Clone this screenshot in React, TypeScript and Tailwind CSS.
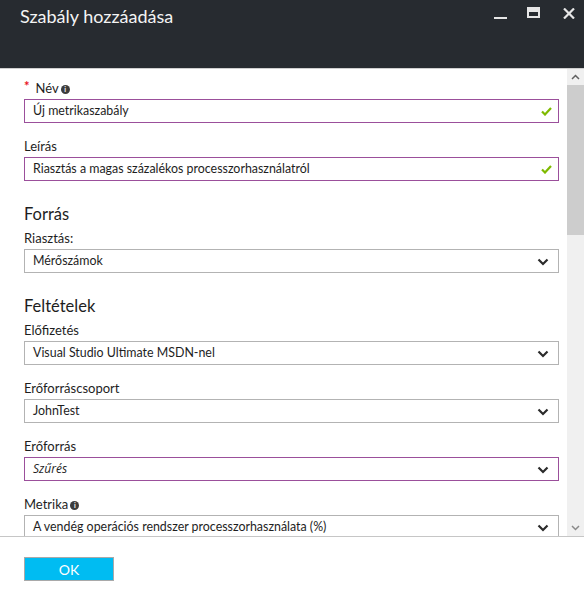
import React from "react";

const font = { fontFamily: 'Lato, "Noto Sans", sans-serif' };

function Chevron() {
  return (
    <svg width="12" height="8" viewBox="0 0 12 8" className="absolute right-[9px] top-[8px]">
      <path d="M1.5 1.5 L6 6 L10.5 1.5" fill="none" stroke="#2b2b2b" strokeWidth="2.2" />
    </svg>
  );
}

function Check() {
  return (
    <svg width="11" height="9" viewBox="0 0 11 9" className="absolute right-[6px] top-[7px]">
      <path d="M1 4.5 L4 7.5 L10 1" fill="none" stroke="#7fba00" strokeWidth="2.2" />
    </svg>
  );
}

function Info() {
  return (
    <span className="ml-[2px] mt-[3px] inline-flex h-[9px] w-[9px] items-center justify-center rounded-full bg-[#3c3c3c] text-[7px] font-bold leading-none text-white">
      i
    </span>
  );
}

function Label({ children, req, info }: { children: React.ReactNode; req?: boolean; info?: boolean }) {
  return (
    <div className="flex h-4 items-center text-[13px] leading-4 text-[#1e1e1e]">
      {req && <span className="mb-[4px] mr-[6px] text-[13px] font-bold leading-none text-[#e81123]">*</span>}
      {children}
      {info && <Info />}
    </div>
  );
}

function Field({
  label,
  value,
  kind,
  purple,
  italic,
  req,
  info,
  first,
}: {
  label: string;
  value: string;
  kind: "text" | "select";
  purple?: boolean;
  italic?: boolean;
  req?: boolean;
  info?: boolean;
  first?: boolean;
}) {
  return (
    <div className={first ? "" : "mt-[15px]"}>
      <Label req={req} info={info}>
        {label}
      </Label>
      <div
        className={`relative mt-[3px] flex h-6 items-center border pl-2 text-[#1e1e1e] ${
          purple ? "border-[#9b4f9b]" : "border-[#b3b3b3]"
        } ${italic ? "font-['Open_Sans'] text-[12px] italic" : "text-[12.4px]"}`}
      >
        {value}
        {kind === "select" ? <Chevron /> : <Check />}
      </div>
    </div>
  );
}

function Heading({ children }: { children: React.ReactNode }) {
  return <div className="mt-[22px] mb-[5px] h-[22px] text-[16.5px] leading-[22px] text-[#1e1e1e]">{children}</div>;
}

export default function App() {
  return (
    <div className="flex h-[599px] w-[584px] flex-col bg-white" style={font}>
      <div className="relative h-[68px] shrink-0 bg-[#272b30]">
        <div className="pl-5 pt-[2px] text-[18px] leading-[28px] text-[#f4f4f4]">Szabály hozzáadása</div>
        <div className="absolute left-[494px] top-[17px] h-[2px] w-[13px] bg-[#e6e6e6]" />
        <div className="absolute left-[527px] top-[7px] h-[11px] w-[13px] border-2 border-t-[5px] border-[#e6e6e6]" />
        <svg width="12" height="11" viewBox="0 0 12 11" className="absolute left-[563px] top-[8px]">
          <path d="M1 0.5 L11 10.5 M11 0.5 L1 10.5" stroke="#e6e6e6" strokeWidth="2.2" />
        </svg>
      </div>
      <div className="h-[1px] shrink-0 bg-[#cfcfcf]" />
      <div className="flex min-h-0 flex-1 border-b border-[#c6c6c6]">
        <div className="min-w-0 flex-1 overflow-hidden pl-6 pr-2 pt-[11px]">
          <Field first req info label="Név" value="Új metrikaszabály" kind="text" purple />
          <Field label="Leírás" value="Riasztás a magas százalékos processzorhasználatról" kind="text" purple />
          <Heading>Forrás</Heading>
          <Field first label="Riasztás:" value="Mérőszámok" kind="select" />
          <Heading>Feltételek</Heading>
          <Field first label="Előfizetés" value="Visual Studio Ultimate MSDN-nel" kind="select" />
          <Field label="Erőforráscsoport" value="JohnTest" kind="select" />
          <Field label="Erőforrás" value="Szűrés" kind="select" purple italic />
          <Field info label="Metrika" value="A vendég operációs rendszer processzorhasználata (%)" kind="select" />
        </div>
        <div className="flex w-[17px] shrink-0 flex-col bg-[#f0f0f0]">
          <div className="flex h-4 items-center justify-center">
            <svg width="9" height="6" viewBox="0 0 9 6">
              <path d="M1 5 L4.5 1.5 L8 5" fill="none" stroke="#606060" strokeWidth="1.5" />
            </svg>
          </div>
          <div className="h-[150px] bg-[#cdcdcd]" />
          <div className="flex-1" />
          <div className="flex h-4 items-center justify-center">
            <svg width="9" height="6" viewBox="0 0 9 6">
              <path d="M1 1 L4.5 4.5 L8 1" fill="none" stroke="#8a8a8a" strokeWidth="1.5" />
            </svg>
          </div>
        </div>
      </div>
      <div className="h-[62px] shrink-0 pl-6 pt-5">
        <button className="flex h-6 w-[90px] items-center justify-center border border-[#a9a9a9] bg-[#00bcf2] text-[14px] text-white">
          OK
        </button>
      </div>
    </div>
  );
}
